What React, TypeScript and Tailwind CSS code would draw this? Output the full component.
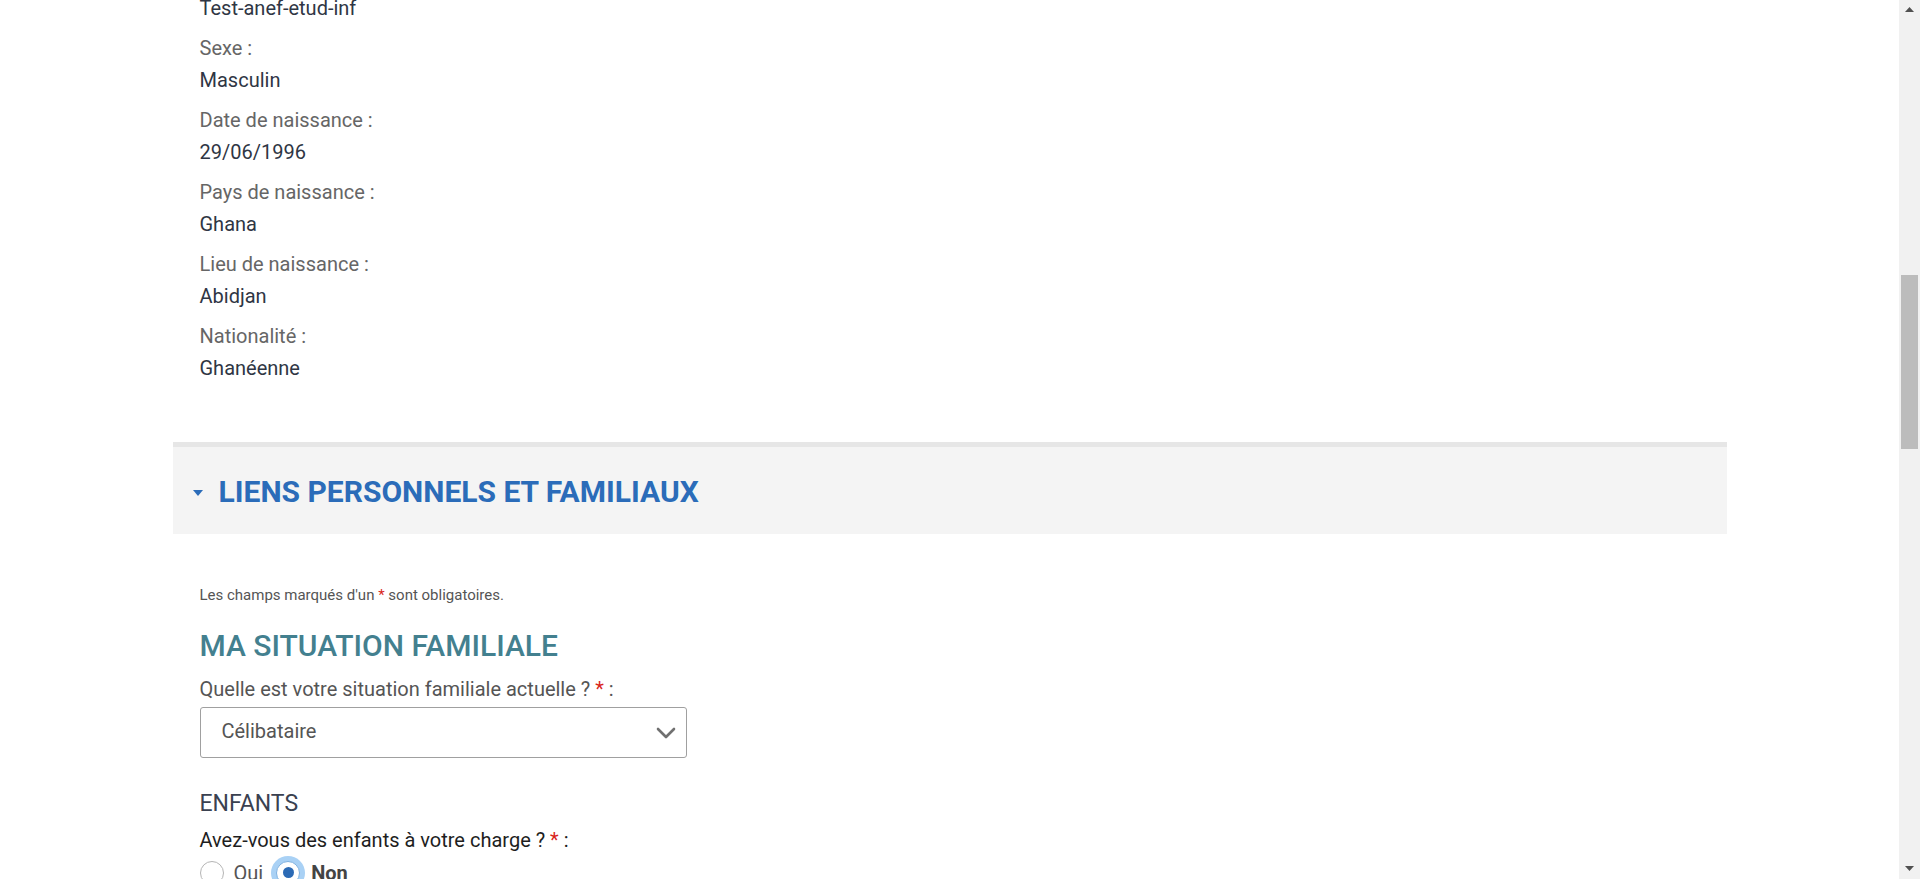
import React from "react";

const Field = ({ label, value, first }: { label?: string; value: string; first?: boolean }) => (
  <div className={first ? "" : "mt-[8px]"}>
    {label && <div className="text-[20px] leading-[32px] text-[#666666]">{label}</div>}
    <div className="text-[20px] leading-[32px] text-[#2f3644]">{value}</div>
  </div>
);

export default function App() {
  return (
    <div className="flex h-[879px] w-full overflow-hidden bg-white" style={{ fontFamily: "Roboto, 'Liberation Sans', sans-serif" }}>
      <main className="flex-1 overflow-hidden">
        <div className="mx-auto w-[1554px]">
          <div className="-mt-[8px] px-[27px]">
            <Field value="Test-anef-etud-inf" first />
            <Field label="Sexe :" value="Masculin" />
            <Field label="Date de naissance :" value="29/06/1996" />
            <Field label="Pays de naissance :" value="Ghana" />
            <Field label="Lieu de naissance :" value="Abidjan" />
            <Field label="Nationalité :" value="Ghanéenne" />
          </div>

          <section className="mt-[58px] border-t-[5px] border-[#e6e6e6] bg-[#f4f4f4] pl-[20px] pt-[27px] pb-[24px]">
            <h2 className="flex items-center text-[30px] font-bold leading-[36px] text-[#2b6cb9]">
              <svg width="10" height="6" viewBox="0 0 10 6" className="mr-[16px] mt-[1px]">
                <path d="M0 0 L10 0 L5 6 Z" fill="#2b6cb9" />
              </svg>
              LIENS PERSONNELS ET FAMILIAUX
            </h2>
          </section>

          <div className="px-[27px]">
            <p className="mt-[51px] text-[15px] leading-[20px] text-[#555555]">
              Les champs marqués d'un <span className="text-[#d9261c]">*</span> sont obligatoires.
            </p>
            <h3 className="mt-[23px] text-[30px] font-medium leading-[36px] text-[#43808f]">MA SITUATION FAMILIALE</h3>
            <div className="mt-[13px] text-[20px] leading-[24px] text-[#555555]">
              Quelle est votre situation familiale actuelle ? <span className="text-[#d9261c]">*</span> :
            </div>
            <div className="mt-[6px] flex h-[51px] w-[487px] items-center justify-between rounded-[3px] border border-[#a0a0a0] bg-white pl-[21px] pr-[10px]">
              <span className="pb-[4px] text-[20px] text-[#555555]">Célibataire</span>
              <svg width="20" height="12" viewBox="0 0 20 12">
                <path d="M2 2 L10 10 L18 2" fill="none" stroke="#707070" strokeWidth="2.6" strokeLinecap="round" strokeLinejoin="round" />
              </svg>
            </div>
            <div className="mt-[32px] text-[23px] leading-[28px] text-[#3a4150]">ENFANTS</div>
            <div className="mt-[10px] text-[20px] leading-[24px] text-[#1e1e1e]">
              Avez-vous des enfants à votre charge ? <span className="text-[#d9261c]">*</span> :
            </div>
            <div className="mt-[4px] flex h-[33px] items-center">
              <span className="h-[24px] w-[24px] rounded-full border border-[#b5b5b5] bg-white" />
              <span className="ml-[10px] text-[20px] text-[#555555]">Oui</span>
              <span className="ml-[13px] flex h-[24px] w-[24px] items-center justify-center rounded-full border border-[#7fb1e0] bg-white shadow-[0_0_0_5px_#a9d1f5]">
                <span className="h-[11px] w-[11px] rounded-full bg-[#2b6ab5]" />
              </span>
              <span className="ml-[11px] text-[20px] font-bold text-[#444444]">Non</span>
            </div>
          </div>
        </div>
      </main>
      <div className="relative w-[21px] bg-[#f1f1f1]">
        <svg width="9" height="5" viewBox="0 0 9 5" className="absolute left-[6px] top-[7px]">
          <path d="M0 5 L9 5 L4.5 0 Z" fill="#505050" />
        </svg>
        <div className="absolute left-[2px] top-[275px] h-[174px] w-[17px] bg-[#bcbcbc]" />
        <svg width="9" height="5" viewBox="0 0 9 5" className="absolute bottom-[8px] left-[6px]">
          <path d="M0 0 L9 0 L4.5 5 Z" fill="#505050" />
        </svg>
      </div>
    </div>
  );
}
